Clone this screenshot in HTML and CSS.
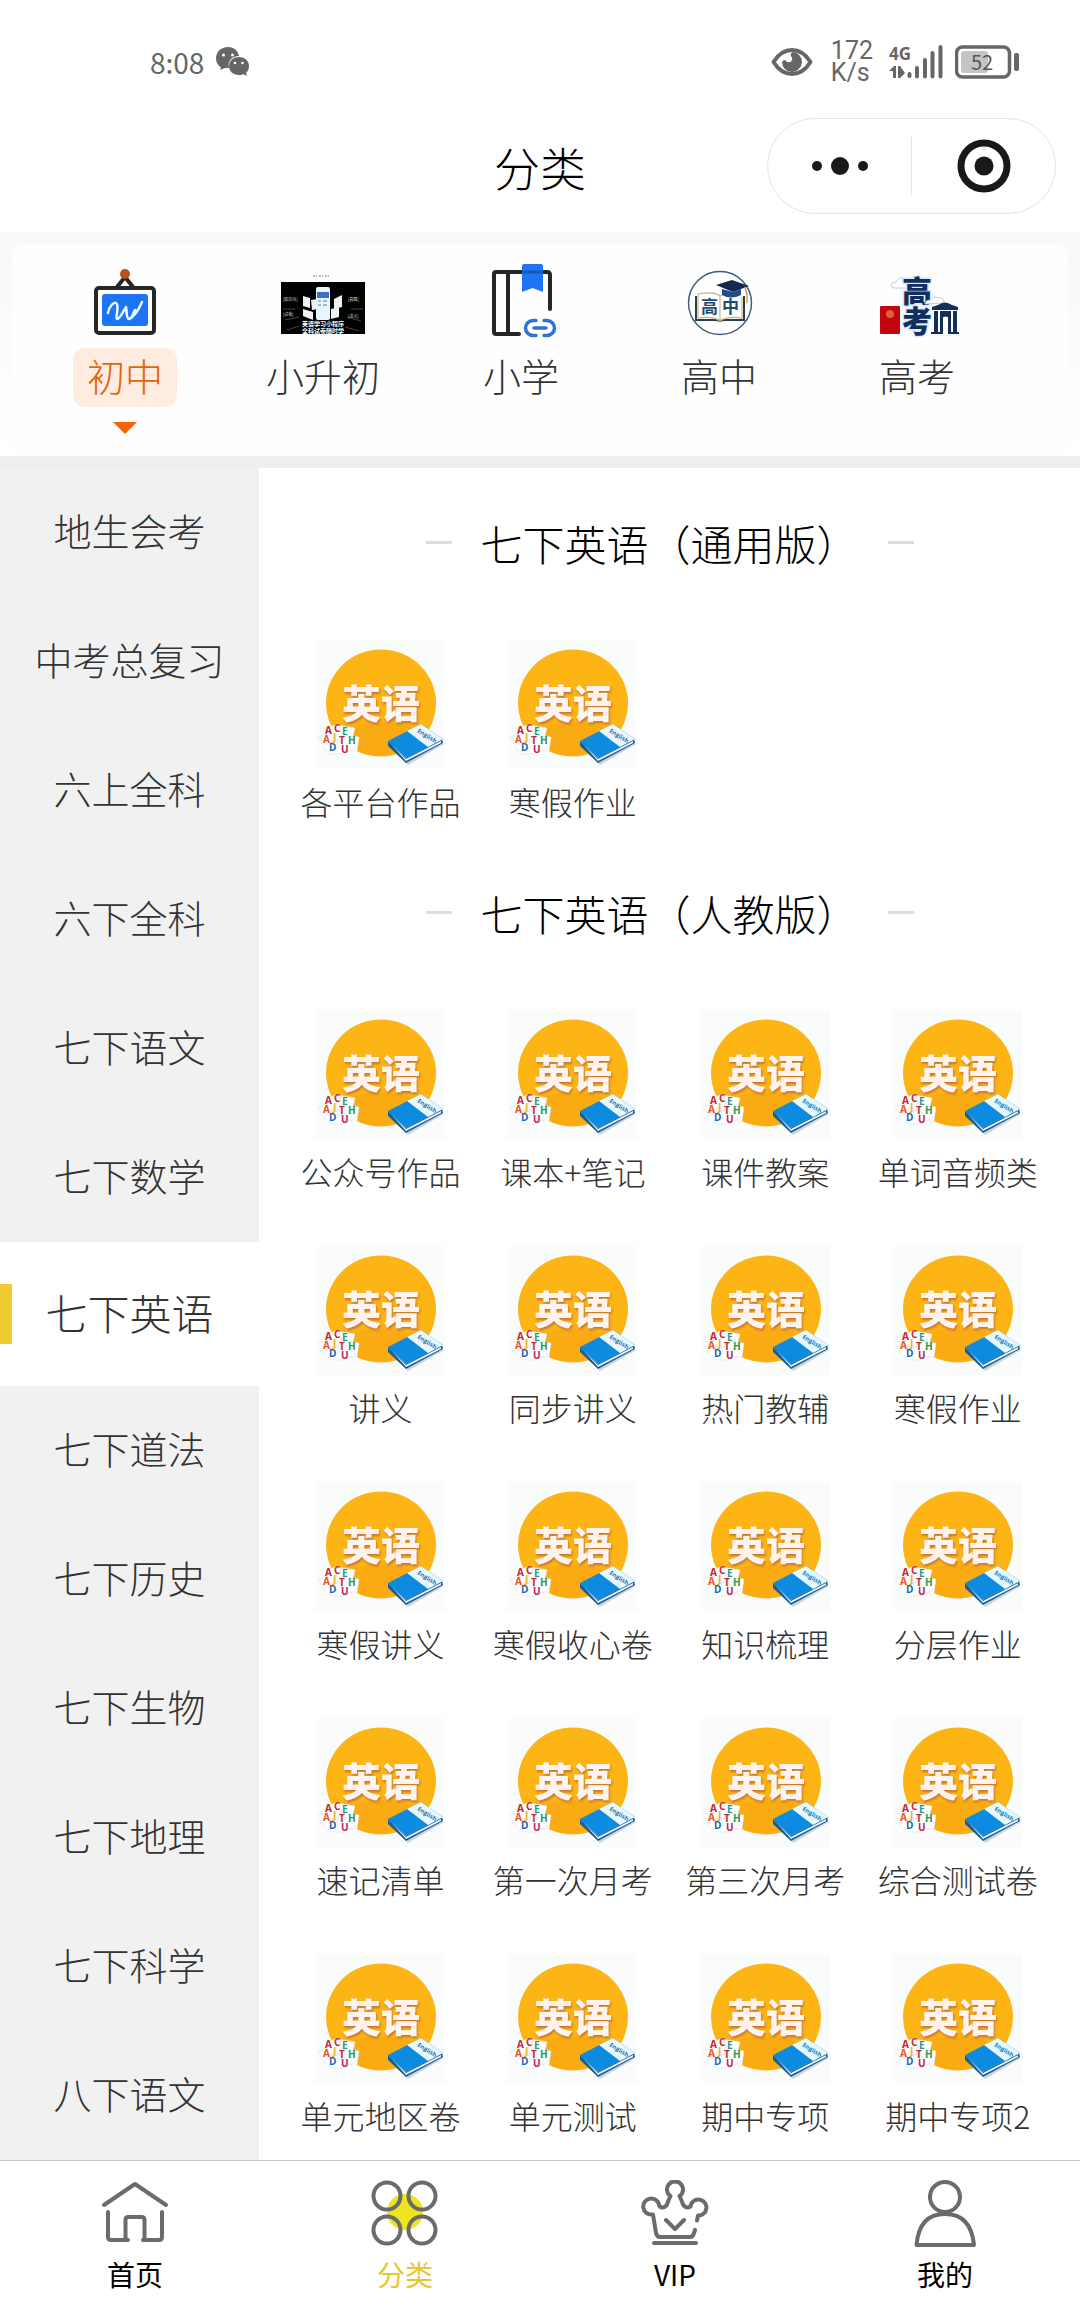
FILE: index.html
```html
<!DOCTYPE html>
<html lang="zh-CN">
<head>
<meta charset="utf-8">
<meta name="viewport" content="width=device-width, initial-scale=1">
<title>分类</title>
<link rel="stylesheet" href="styles.css">
</head>
<body>
<header class="top">
  <div class="status">
    <div class="status-side">
      <span class="clock">8:08</span>
      <svg width="34" height="30" viewBox="0 0 34 30" fill="#666"><path d="M12 0C5 0 0 5 0 11.500c0 4 2 7 5 9L4 23l5-2h4c-2-7 3-12 10-12C22 3 17 0 12 0z"/><path d="M23 10c-6 0-10 4-10 9s4 9 10 9c2 0 3 0 4-1l4 2-1-3c2-2 3-4 3-7 0-5-4-9-10-9z"/><g fill="#fff"><circle cx="7.500" cy="8" r="1.500"/><circle cx="16.500" cy="8" r="1.500"/><circle cx="19" cy="16" r="1.300"/><circle cx="26.500" cy="16" r="1.300"/></g></svg>
    </div>
    <div class="status-side">
      <svg width="42" height="30" viewBox="0 0 42 30"><path d="M2.500 15Q10 3 21 3t18.500 12Q32 27 21 27T2.500 15z" fill="none" stroke="#666" stroke-width="4" stroke-linejoin="round"/><path d="M22 5a10 10 0 1 1-11 10q1-2 3-2 2 3 5 2 4-2 1-6-1-3 2-4z" fill="#666"/></svg>
      <span class="speed">172<br>K/s</span>
      <svg width="54" height="36" viewBox="0 0 54 36"><text x="0" y="16" class="net">4G</text><g fill="#666"><path d="M0 27l5-5h2v12H4v-7zM9 22h2l5 7-5 5H9z"/></g><path d="M20.500 30v2M28 24v8.500M36 16v16.500M43.500 9v23.500M51.500 3v29.500" stroke="#666" stroke-width="4" stroke-linecap="round"/></svg>
      <svg class="battery" width="64" height="34" viewBox="0 0 64 34"><rect x="1.500" y="2" width="53" height="30" rx="6" fill="none" stroke="#666" stroke-width="3.500"/><rect x="6" y="6" width="27" height="22" rx="3" fill="#c4c4c4"/><rect x="59" y="8" width="5" height="18" rx="2" fill="#666"/><text x="27" y="25" class="charge">52</text></svg>
    </div>
  </div>
  <div class="nav">
    <h1 class="nav-title">分类</h1>
    <div class="capsule">
      <button class="capsule-btn" aria-label="更多"><svg width="56" height="20" viewBox="0 0 56 20" fill="#191919"><circle cx="5" cy="10" r="5"/><circle cx="28" cy="10" r="9"/><circle cx="51" cy="10" r="5"/></svg></button>
      <button class="capsule-btn capsule-close" aria-label="关闭"><svg width="54" height="54" viewBox="0 0 54 54"><circle cx="27" cy="27" r="23" fill="none" stroke="#191919" stroke-width="7"/><circle cx="27" cy="27" r="9.500" fill="#191919"/></svg></button>
    </div>
  </div>
</header>

<nav class="stages" aria-label="学段">
  <div class="stage-list">
    <button class="stage stage-on">
      <svg width="84" height="76" viewBox="0 0 84 76"><path d="M42 13l-8 10M42 13l8 10" stroke="#262626" stroke-width="4"/><rect x="13" y="24" width="58" height="45" rx="3" fill="#fff" stroke="#262626" stroke-width="4"/><circle cx="42" cy="10" r="5" fill="#b9521a"/><rect x="19" y="30" width="46" height="32" rx="3" fill="#1d75f5"/><path d="M25 49c1-7 6-11 8-10 4 2-1 15 1 16 3 0 7-9 9-12 1 4 0 12 3 12s4-6 6-9M46 55q7-3 13-17" fill="none" stroke="#eafaff" stroke-width="2.500" stroke-linecap="round" stroke-linejoin="round"/></svg>
      <span class="stage-name">初中</span>
    </button>
    <button class="stage">
      <svg width="84" height="76" viewBox="0 0 84 76"><path d="M32 12h18" stroke="#bbb" stroke-width="2" stroke-dasharray="2 1 1 2"/><rect y="18" width="84" height="52"/><path d="M4 56l14-3M66 53l14 4M6 66l12-4M64 63l14 4M2 45h12M70 45h12" stroke="#444"/><g fill="#eef2f2"><path d="M22 32l7 2v10l-7-2zM30 36l7-1v10l-6 1zM22 45l10 3v8l-10-4zM61 31l-8 4v10l8-2zM58 43l-8 2v10l8-2z"/></g><rect x="35" y="23" width="14" height="33" rx="2" fill="#e9f6f9"/><path d="M36 28h12v6H36z" fill="#3b70c9"/><path d="M37 37h3M42 37h4M37 41h3M42 41h4" stroke="#8fc3dc" stroke-width="2"/><g class="poster-tag"><text x="2" y="37">[知识点]</text><text x="67" y="37">[真题]</text><text x="2" y="52">[试卷]</text><text x="67" y="54">[讲义]</text></g><g class="poster"><text x="42" y="62">英语学习小程序</text><text x="42" y="69">全科试卷随时学</text></g></svg>
      <span class="stage-name">小升初</span>
    </button>
    <button class="stage">
      <svg width="84" height="76" viewBox="0 0 84 76" fill="none" stroke-linecap="round" stroke-linejoin="round"><path d="M40 70H17q-2 0-2-2V10q0-2 2-2h51q3 0 3 3v34M29 8v62" stroke="#262626" stroke-width="4"/><path d="M43 2q0-2 2-2h17q2 0 2 2v26l-10.500-4L43 28z" fill="#1d75f5"/><path d="M43 6.500h21v3H43z" fill="#1a59b5"/><path d="M57 56.500h-3a7 7 0 0 0 0 15h3M65 56.500h3a7 7 0 0 1 0 15h-3M55 64h12" stroke="#2f74d6" stroke-width="3.500"/></svg>
      <span class="stage-name">小学</span>
    </button>
    <button class="stage">
      <svg width="84" height="76" viewBox="0 0 84 76"><circle cx="43" cy="39" r="31.500" fill="#fff" stroke="#3c5f80" stroke-width="1.500"/><path d="M19 32v24h18q6 0 6 2 0-2 6-2h18V32" fill="none" stroke="#2a4052" stroke-width="2"/><path d="M21 54V30q16-3 22 2 4-3 8-3M65 33v21q-16-2-22 3-6-5-22-3M43 32v24" fill="none" stroke="#cdb277" stroke-width="1.200"/><text x="24" y="49" class="badge-word">高</text><text x="45" y="49" class="badge-word">中</text><path d="M39 21l16-5 17 6-16 6z" fill="#15294c"/><path d="M45 25v6q9 5 19 0v-6l-8 3z" fill="#1d4f86"/><path d="M68 23l2 8v8" fill="none" stroke="#caa24c" stroke-width="1.500"/></svg>
      <span class="stage-name">高中</span>
    </button>
    <button class="stage">
      <svg width="84" height="76" viewBox="0 0 84 76"><path d="M16 22q0-4 5-4 2-5 8-4 4 0 4 4v6H20q-4 0-4-2z" fill="#fff" stroke="#b9cfe0"/><text x="42" y="38" class="exam-word">高</text><text x="42" y="68" class="exam-word">考</text><path d="M50 40q0-4 6-4 3-5 8-2 5-1 5 5z" fill="#fff" stroke="#b9cfe0"/><rect x="5" y="42" width="20" height="28" rx="1" fill="#c2050f"/><circle cx="15" cy="50" r="4" fill="#d9652b"/><g fill="#102f5c"><path d="M57 43l6-2q7-5 14 0l6 2v3H57z"/><path d="M59 47h4v21h-4zM65 47h3v21h-3zM73 47h3v21h-3zM78 47h4v21h-4zM56 68h12v2H56zM73 68h11v2H73zM65 47h11v8q-5-5-11 0z"/></g></svg>
      <span class="stage-name">高考</span>
    </button>
  </div>
</nav>

<main class="main">
  <aside class="side">
    <button class="side-item">地生会考</button>
    <button class="side-item">中考总复习</button>
    <button class="side-item">六上全科</button>
    <button class="side-item">六下全科</button>
    <button class="side-item">七下语文</button>
    <button class="side-item">七下数学</button>
    <button class="side-item side-on">七下英语</button>
    <button class="side-item">七下道法</button>
    <button class="side-item">七下历史</button>
    <button class="side-item">七下生物</button>
    <button class="side-item">七下地理</button>
    <button class="side-item">七下科学</button>
    <button class="side-item">八下语文</button>
  </aside>
  <div class="content">
    <section>
      <h2 class="group-title">七下英语（通用版）</h2>
      <div class="grid">
        <a class="tile" href="#">
          <svg class="tile-pic" viewBox="0 0 129 129">
            <g id="english">
              <rect width="129" height="129" fill="#fafcfb"/>
              <ellipse cx="65" cy="63" rx="55" ry="53.5" fill="#fdb415"/>
              <path d="M28 90Q60 76 98 88L76 114Q50 120 30 104Z" fill="#f8a510" opacity=".6"/>
              <text x="65" y="78" class="tile-word">英语</text>
              <path d="M10 88l13-4 4 15-13 4zM21 85l18 3-4 16-16-3zM2 97l13-4 8 14-12 5zM27 95l16 2-2 14-15 0zM14 101l14-3 12 10-13 6-12 0z" fill="#fff" stroke="#dde3e2" stroke-width=".6"/>
              <g class="tile-letters">
                <text x="9" y="94" fill="#c9202f">A</text><text x="18" y="92" fill="#d4262c">C</text><text x="26" y="95" fill="#1d9b8d">E</text>
                <text x="7" y="103" fill="#e8542a">A</text><text x="17" y="101" fill="#efb21c">J</text><text x="23" y="104" fill="#c02a3c">T</text><text x="32" y="104" fill="#249a4c">H</text>
                <text x="13" y="111" fill="#1a66b5">D</text><text x="25" y="113" fill="#bd2358">U</text>
              </g>
              <path d="M74 106l18 19 36-21-8-2z" fill="#b9c3d4" opacity=".7"/>
              <path d="M72 101l18 17 36-19 1 4-37 20-18-17z" fill="#1a5f94"/>
              <path d="M75 104l15 15 35-18 0 2-35 18z" fill="#eef6fa"/>
              <path d="M72 101l33-17 22 15-37 19z" fill="#0c8be0"/>
              <path d="M91 91l14-7 22 15-15 8z" fill="#e6f8fb"/>
              <text transform="translate(101 92) rotate(32)" class="tile-en">English</text>
            </g>
          </svg>各平台作品</a>
        <a class="tile" href="#"><svg class="tile-pic" viewBox="0 0 129 129"><use href="#english"/></svg>寒假作业</a>
      </div>
    </section>
    <section>
      <h2 class="group-title">七下英语（人教版）</h2>
      <div class="grid">
        <a class="tile" href="#"><svg class="tile-pic" viewBox="0 0 129 129"><use href="#english"/></svg>公众号作品</a>
        <a class="tile" href="#"><svg class="tile-pic" viewBox="0 0 129 129"><use href="#english"/></svg>课本+笔记</a>
        <a class="tile" href="#"><svg class="tile-pic" viewBox="0 0 129 129"><use href="#english"/></svg>课件教案</a>
        <a class="tile" href="#"><svg class="tile-pic" viewBox="0 0 129 129"><use href="#english"/></svg>单词音频类</a>
        <a class="tile" href="#"><svg class="tile-pic" viewBox="0 0 129 129"><use href="#english"/></svg>讲义</a>
        <a class="tile" href="#"><svg class="tile-pic" viewBox="0 0 129 129"><use href="#english"/></svg>同步讲义</a>
        <a class="tile" href="#"><svg class="tile-pic" viewBox="0 0 129 129"><use href="#english"/></svg>热门教辅</a>
        <a class="tile" href="#"><svg class="tile-pic" viewBox="0 0 129 129"><use href="#english"/></svg>寒假作业</a>
        <a class="tile" href="#"><svg class="tile-pic" viewBox="0 0 129 129"><use href="#english"/></svg>寒假讲义</a>
        <a class="tile" href="#"><svg class="tile-pic" viewBox="0 0 129 129"><use href="#english"/></svg>寒假收心卷</a>
        <a class="tile" href="#"><svg class="tile-pic" viewBox="0 0 129 129"><use href="#english"/></svg>知识梳理</a>
        <a class="tile" href="#"><svg class="tile-pic" viewBox="0 0 129 129"><use href="#english"/></svg>分层作业</a>
        <a class="tile" href="#"><svg class="tile-pic" viewBox="0 0 129 129"><use href="#english"/></svg>速记清单</a>
        <a class="tile" href="#"><svg class="tile-pic" viewBox="0 0 129 129"><use href="#english"/></svg>第一次月考</a>
        <a class="tile" href="#"><svg class="tile-pic" viewBox="0 0 129 129"><use href="#english"/></svg>第三次月考</a>
        <a class="tile" href="#"><svg class="tile-pic" viewBox="0 0 129 129"><use href="#english"/></svg>综合测试卷</a>
        <a class="tile" href="#"><svg class="tile-pic" viewBox="0 0 129 129"><use href="#english"/></svg>单元地区卷</a>
        <a class="tile" href="#"><svg class="tile-pic" viewBox="0 0 129 129"><use href="#english"/></svg>单元测试</a>
        <a class="tile" href="#"><svg class="tile-pic" viewBox="0 0 129 129"><use href="#english"/></svg>期中专项</a>
        <a class="tile" href="#"><svg class="tile-pic" viewBox="0 0 129 129"><use href="#english"/></svg>期中专项2</a>
      </div>
    </section>
  </div>
</main>

<nav class="tabbar" aria-label="主导航">
  <a class="tab" href="#"><svg class="tab-icon" viewBox="0 0 68 68"><path d="M3 25L34 4l31 21M7 32v25q0 3 3 3h17M61 32v25q0 3-3 3H42M24.500 59V40q0-3 3-3h13q3 0 3 3v19"/></svg>首页</a>
  <a class="tab tab-on" href="#"><svg class="tab-icon" viewBox="0 0 68 68"><circle class="tab-spot" cx="34" cy="32" r="18"/><circle cx="16" cy="16" r="13.500"/><circle cx="51" cy="16" r="13.500"/><circle cx="16" cy="50" r="13.500"/><circle cx="51" cy="50" r="13.500"/></svg>分类</a>
  <a class="tab" href="#"><svg class="tab-icon" viewBox="0 0 68 68"><path d="M11 34.500a8 8 0 1 1 7-10q0 3 4 3 4-1 5-6l2.500-5.500a8 8 0 1 1 9 0l2.500 5.500q1 5 5 6 4 0 4-3a8 8 0 1 1 7 11l-1 5M54 50l-1 3q-1 4-4 4H19q-3 0-4-4l-3-18.500M25 40l9 9 9-9M13 63h42"/></svg>VIP</a>
  <a class="tab" href="#"><svg class="tab-icon" viewBox="0 0 68 68"><circle cx="34" cy="17" r="15"/><path d="M5.500 65Q8 34 34 34t29 31z"/></svg>我的</a>
</nav>
</body>
</html>
```
FILE: styles.css
```css
* { box-sizing: border-box; }

body {
  margin: 0;
  min-height: 100vh;
  display: flex;
  flex-direction: column;
  background: #fff;
  color: #333;
  font-family: "Noto Sans CJK SC", sans-serif;
  font-weight: 300;
}

button {
  margin: 0;
  padding: 0;
  border: 0;
  background: none;
  color: inherit;
  font: inherit;
  cursor: pointer;
}

a { color: inherit; text-decoration: none; }
svg { display: block; flex: none; }

/* status bar and title */
.top { background: #fff; }

.status {
  display: flex;
  justify-content: space-between;
  height: 102px;
  padding: 22px 61px 0 150px;
  color: #666;
}
.status-side { display: flex; align-items: center; }
.clock { margin-right: 12px; font-size: 28px; font-weight: 400; }
.speed {
  margin: 0 16px 0 18px;
  font: 400 25px/22px Roboto, sans-serif;
}
.battery { margin-left: 12px; }
.net { font: 700 17px "Open Sans", sans-serif; fill: #666; }
.charge { font: 400 20px "Noto Sans CJK SC", sans-serif; fill: #555; text-anchor: middle; }

.nav {
  display: grid;
  grid-template-columns: 1fr auto 1fr;
  align-items: center;
  height: 130px;
  padding: 0 24px 2px;
}
.nav-title {
  grid-column: 2;
  margin: 0;
  color: #000;
  font-size: 46px;
  font-weight: 300;
  line-height: 60px;
}
.capsule {
  justify-self: end;
  display: flex;
  align-items: center;
  width: 289px;
  height: 96px;
  border: 1px solid #e4e4e4;
  border-radius: 48px;
}
.capsule-btn {
  flex: 1;
  display: flex;
  align-items: center;
  justify-content: center;
  height: 58px;
}
.capsule-close { border-left: 1px solid #e4e4e4; }

/* stage picker */
.stages {
  padding: 12px 12px 0;
  border-bottom: 12px solid #eee;
  background: linear-gradient(#f8f8f8, #fff);
}
.stage-list {
  display: flex;
  height: 212px;
  padding: 20px 14px 0;
  border-radius: 12px;
  background: #fefefe;
}
.stage {
  display: flex;
  flex-direction: column;
  align-items: center;
  gap: 8px;
  width: 198px;
}
.stage-name {
  padding: 0 14px 6px;
  border-radius: 12px;
  font-size: 38px;
  line-height: 53px;
}
.stage-on .stage-name { background: #ffece0; color: #e2650f; }
.stage-on::after {
  content: "";
  margin-top: 7px;
  border: 12px solid transparent;
  border-top-color: #f56207;
  border-bottom: 0;
}
.badge-word { font: 700 17px "Noto Sans CJK SC", sans-serif; fill: #1f4b73; }
.exam-word {
  font: 900 30px "Noto Sans CJK SC", sans-serif;
  fill: #102f5c;
  stroke: #dcebf5;
  stroke-width: 3px;
  paint-order: stroke;
  text-anchor: middle;
}
.poster { font: 700 6px "Noto Sans CJK SC", sans-serif; fill: #fff; text-anchor: middle; }
.poster-tag { font: 400 4px "Noto Sans CJK SC", sans-serif; fill: #ddd; }

/* subject list and resources */
.main { flex: 1; display: flex; }

.side {
  display: flex;
  flex-direction: column;
  flex: 0 0 24%;
  background: #f1f1f1;
}
.side-item { height: 129px; padding-bottom: 6px; font-size: 38px; }
.side-on {
  display: flex;
  align-items: center;
  justify-content: center;
  position: relative;
  height: 144px;
  background: #fff;
  font-size: 42px;
}
.side-on::before {
  content: "";
  position: absolute;
  top: 42px;
  left: 0;
  width: 12px;
  height: 60px;
  background: #f0cb32;
}

.content { flex: 1; }
.group-title {
  display: flex;
  align-items: center;
  justify-content: center;
  gap: 29px;
  height: 148px;
  margin: 0;
  color: #000;
  font-size: 42px;
  font-weight: 300;
}
.group-title::before,
.group-title::after {
  content: "";
  width: 26px;
  height: 3px;
  background: #ddd;
}
.grid {
  display: grid;
  grid-template-columns: repeat(4, 1fr);
  gap: 14px 0;
  padding: 0 26px 0 25px;
}
.tile {
  display: flex;
  flex-direction: column;
  align-items: center;
  gap: 8px;
  height: 222px;
  padding-top: 24px;
  font-size: 32px;
  line-height: 48px;
  white-space: nowrap;
}
.tile-pic { width: 129px; height: 129px; }
.tile-word {
  font: 900 39px "Noto Sans CJK SC", sans-serif;
  fill: #fdf4f2;
  text-anchor: middle;
  filter: drop-shadow(1px 2px 1px #c9762c);
}
.tile-letters { font: 700 10px "Open Sans", sans-serif; }
.tile-en { font: 700 6px "Open Sans", sans-serif; fill: #1675b8; }

/* bottom tabs */
.tabbar {
  display: flex;
  position: sticky;
  bottom: 0;
  height: 150px;
  border-top: 1px solid #c8c8c8;
  background: #fff;
}
.tab {
  flex: 1;
  display: flex;
  flex-direction: column;
  align-items: center;
  gap: 8px;
  padding-top: 19px;
  color: #000;
  font-size: 28px;
  font-weight: 400;
  line-height: 36px;
}
.tab-on { color: #e8c62f; }
.tab-icon {
  width: 68px;
  height: 68px;
  fill: none;
  stroke: #6b6b6b;
  stroke-width: 4px;
  stroke-linecap: round;
  stroke-linejoin: round;
}
.tab-spot { fill: #ede51f; stroke: none; }
```
